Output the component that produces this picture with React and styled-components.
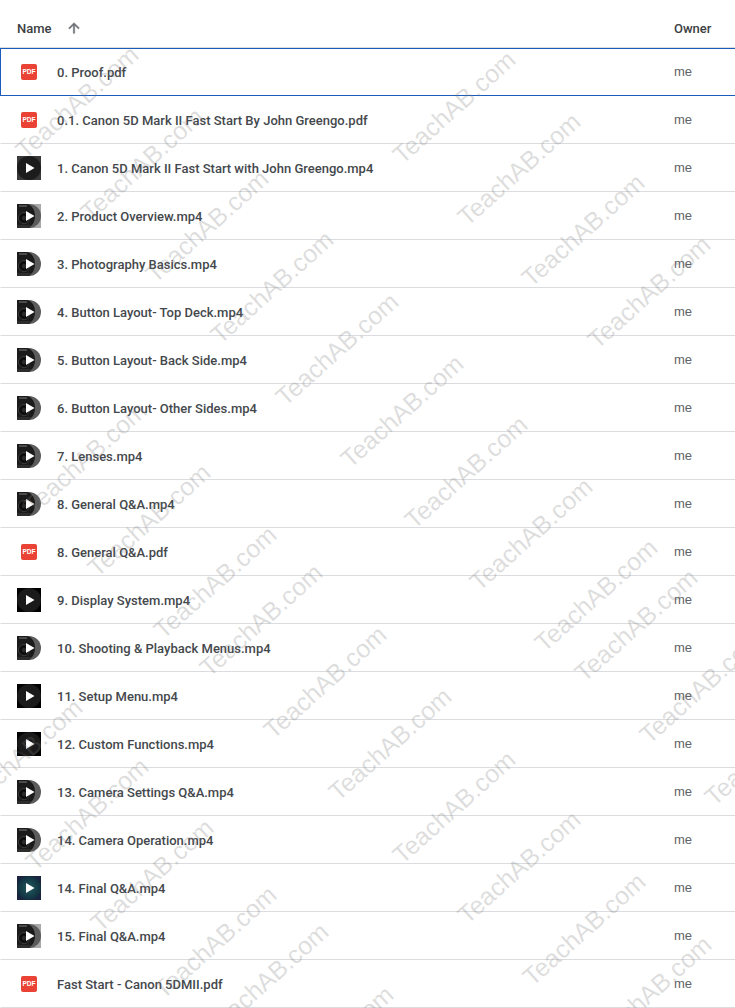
import styled, { createGlobalStyle } from "styled-components";

const GlobalStyle = createGlobalStyle`
  html, body {
    margin: 0;
    padding: 0;
    background: #fff;
  }
  body {
    font-family: Roboto, "Liberation Sans", sans-serif;
  }
`;

const Page = styled.div`
  position: relative;
  width: 735px;
  height: 1008px;
  overflow: hidden;
  background: #fff;
`;

const Columns = styled.div`
  display: grid;
  grid-template-columns: 1fr 61px;
  align-items: center;
  box-sizing: border-box;
  height: 48px;
`;

const Header = styled(Columns)`
  border-bottom: 1px solid #dadce0;
  padding: 9px 0 0 17px;
  color: #3c4043;
  font-size: 13px;
  font-weight: 500;
`;

const NameHead = styled.div`
  display: flex;
  align-items: center;
  gap: 7px;
  height: 16px;
`;

const SortIcon = styled.svg`
  width: 16px;
  height: 16px;
  fill: #6b6f74;
  stroke: #6b6f74;
  stroke-width: 0.8;
  margin-left: 7px;
`;

const Row = styled(Columns)`
  border-bottom: 1px solid ${(props) => (props.$selected ? "#1a5cbc" : "#dadce0")};
  border-top: 1px solid ${(props) => (props.$selected ? "#1a5cbc" : "transparent")};
  border-left: 1px solid ${(props) => (props.$selected ? "#1a5cbc" : "transparent")};
  padding-left: 16px;
`;

const NameCell = styled.div`
  display: flex;
  align-items: center;
  gap: 16px;
  color: #44484c;
  font-size: 13px;
  font-weight: 500;
  white-space: nowrap;
`;

const OwnerCell = styled.div`
  color: #5f6368;
  font-family: "Liberation Sans", Arial, sans-serif;
  font-size: 13px;
  margin-top: -1px;
`;

const IconSlot = styled.div`
  display: flex;
  align-items: center;
  justify-content: center;
  width: 24px;
  height: 24px;
`;

const PdfBadge = styled.div`
  display: flex;
  align-items: center;
  justify-content: center;
  width: 16px;
  height: 16px;
  border-radius: 2px;
  background: #ea4335;
  color: #fff;
  font-family: "Liberation Sans", sans-serif;
  font-size: 6.5px;
  font-weight: 700;
  line-height: 1;
  overflow: hidden;
`;

const Marks = styled.div`
  position: absolute;
  inset: 0;
  overflow: hidden;
  pointer-events: none;
`;

const Mark = styled.span`
  position: absolute;
  font-family: "Liberation Sans", Arial, sans-serif;
  font-size: 25px;
  line-height: 26px;
  color: rgba(120, 120, 120, 0.25);
  white-space: nowrap;
  transform-origin: 0 100%;
  transform: rotate(-41.8deg);
`;

const PLAY = "M9 7 L17.5 12 L9 17 Z";

function CameraThumb({ corner }) {
  return (
    <svg width="24" height="24" viewBox="0 0 24 24">
      <rect width="24" height="24" fill={corner} />
      <circle cx="12" cy="12" r="12" fill="#5c5c5c" />
      <path d="M0 0H10C15 1 18 6 18 12C18 18 15 23 10 24H0Z" fill="#1b1b1b" />
      <rect x="0" y="21" width="13" height="3" fill="#2c2c2c" />
      <rect x="2" y="1" width="8" height="2" fill="#4a4a4a" />
      <circle cx="7" cy="14" r="5.5" fill="#0c0c0c" stroke="#3c3c3c" strokeWidth="1" />
      <circle cx="7" cy="14" r="2.2" fill="#2a2a2a" />
      <path d={PLAY} fill="#fff" />
    </svg>
  );
}

function DiscThumb({ back, disc }) {
  return (
    <svg width="24" height="24" viewBox="0 0 24 24">
      <rect width="24" height="24" fill={back} />
      <circle cx="12" cy="12" r="12" fill={disc} />
      <path d={PLAY} fill="#fff" />
    </svg>
  );
}

function TealThumb() {
  return (
    <svg width="24" height="24" viewBox="0 0 24 24">
      <defs>
        <radialGradient id="tealGlow">
          <stop offset="0%" stopColor="#1f5a5e" />
          <stop offset="100%" stopColor="#12303f" />
        </radialGradient>
      </defs>
      <rect width="24" height="24" fill="#1a2440" />
      <circle cx="12" cy="12" r="12" fill="url(#tealGlow)" />
      <path d={PLAY} fill="#fff" />
    </svg>
  );
}

function FileIcon({ kind }) {
  if (kind === "pdf") return <PdfBadge>PDF</PdfBadge>;
  if (kind === "camGrey") return <CameraThumb corner="#a8a8a8" />;
  if (kind === "cam") return <CameraThumb corner="#fff" />;
  if (kind === "dark") return <DiscThumb back="#3a3a3a" disc="#1c1c1c" />;
  if (kind === "teal") return <TealThumb />;
  return <DiscThumb back="#000" disc="#1a1a1a" />;
}

const files = [
  ["0. Proof.pdf", "pdf"],
  ["0.1. Canon 5D Mark II Fast Start By John Greengo.pdf", "pdf"],
  ["1. Canon 5D Mark II Fast Start with John Greengo.mp4", "dark"],
  ["2. Product Overview.mp4", "camGrey"],
  ["3. Photography Basics.mp4", "cam"],
  ["4. Button Layout- Top Deck.mp4", "cam"],
  ["5. Button Layout- Back Side.mp4", "cam"],
  ["6. Button Layout- Other Sides.mp4", "cam"],
  ["7. Lenses.mp4", "cam"],
  ["8. General Q&A.mp4", "cam"],
  ["8. General Q&A.pdf", "pdf"],
  ["9. Display System.mp4", "black"],
  ["10. Shooting & Playback Menus.mp4", "cam"],
  ["11. Setup Menu.mp4", "black"],
  ["12. Custom Functions.mp4", "black"],
  ["13. Camera Settings Q&A.mp4", "cam"],
  ["14. Camera Operation.mp4", "cam"],
  ["14. Final Q&A.mp4", "teal"],
  ["15. Final Q&A.mp4", "camGrey"],
  ["Fast Start - Canon 5DMII.pdf", "pdf"],
];

// where each watermark starts, read off the screenshot
const marks = [
  [15, 155], [80, 217], [145, 279], [210, 340], [275, 402], [340, 464], [404, 525], [469, 587], [534, 648],
  [392, 160], [457, 222], [521, 283], [587, 345],
  [23, 511], [87, 573], [153, 635], [199, 673], [263, 735], [328, 797], [392, 860], [457, 920], [522, 982],
  [574, 678], [639, 740], [704, 802], [588, 1045],
  [-41, 808], [25, 867], [90, 928], [153, 995], [205, 1032], [270, 1095],
];

export default function App() {
  return (
    <Page>
      <GlobalStyle />
      <Header>
        <NameHead>
          Name
          <SortIcon viewBox="0 0 24 24">
            <path d="M4 12l1.41 1.41L11 7.83V20h2V7.83l5.58 5.59L20 12l-8-8-8 8z" />
          </SortIcon>
        </NameHead>
        <div>Owner</div>
      </Header>
      {files.map(([name, kind], i) => (
        <Row key={i} $selected={i === 0}>
          <NameCell>
            <IconSlot>
              <FileIcon kind={kind} />
            </IconSlot>
            {name}
          </NameCell>
          <OwnerCell>me</OwnerCell>
        </Row>
      ))}
      <Marks>
        {marks.map(([x, y], i) => (
          <Mark key={i} style={{ left: x + 13, top: y - 18 }}>
            TeachAB.com
          </Mark>
        ))}
      </Marks>
    </Page>
  );
}
